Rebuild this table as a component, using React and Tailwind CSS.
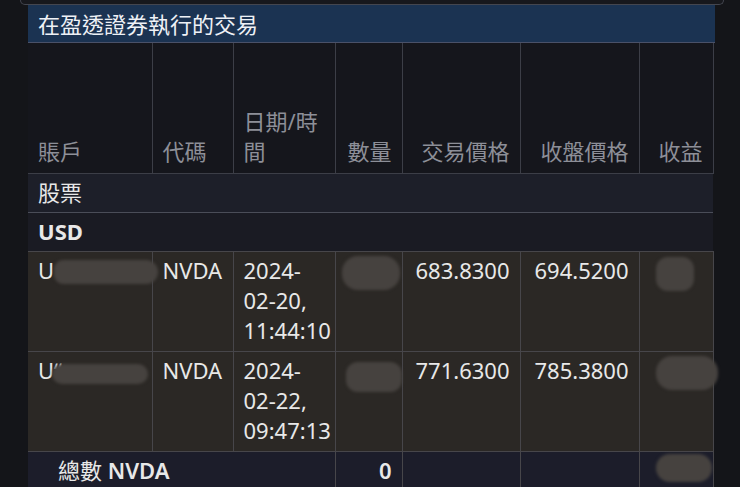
import React from 'react';

const cols = [
  { label: '賬戶', w: 'w-[124px]', align: 'text-left' },
  { label: '代碼', w: 'w-[81px]', align: 'text-left' },
  { label: '日期/時間', w: 'w-[102px]', align: 'text-left' },
  { label: '數量', w: 'w-[67px]', align: 'text-right' },
  { label: '交易價格', w: 'w-[118px]', align: 'text-right' },
  { label: '收盤價格', w: 'w-[119px]', align: 'text-right' },
  { label: '收益', w: 'w-[74px]', align: 'text-right' },
];

const trades = [
  { acct: 'U', date: ['2024-', '02-20,', '11:44:10'], price: '683.8300', close: '694.5200' },
  { acct: 'U\u02bb\u02bb', date: ['2024-', '02-22,', '09:47:13'], price: '771.6300', close: '785.3800' },
];

// blurred redaction smudge
const Smudge = ({ className }) => (
  <div className={`absolute rounded-[12px] bg-[#46423f] blur-[1.5px] ${className}`} />
);

const cell = 'border border-[#47464a] px-[10px] pt-[3px] pb-[4px] align-top';

export default function App() {
  return (
    <div
      className="min-h-screen bg-[#141519] text-[22px] leading-[30px] text-[#e8e8e8] overflow-hidden"
      style={{ fontFamily: '"Noto Sans", "Noto Sans CJK TC", sans-serif' }}
    >
      {/* bottom of the card above */}
      <div className="mx-[20px] w-[704px] h-[5px] rounded-b-[9px] border-x border-b border-[#44464f] bg-[#17181d]" />

      <div className="ml-[28px] w-[687px]">
        {/* Title */}
        <div className="h-[38px] bg-[#1b3352] px-[10px] flex items-center text-[#eef1f6] border-b border-[#4a5168]">
          在盈透證券執行的交易
        </div>

        <table className="w-[685px] table-fixed border-collapse">
          <thead>
            <tr className="h-[130px] bg-[#15161c]">
              {cols.map((c) => (
                <th
                  key={c.label}
                  className={`${c.w} ${c.align} border-x border-[#3c3e47] px-[10px] pb-[7px] align-bottom font-normal text-[#8d8f98] first:border-l-0`}
                >
                  {c.label}
                </th>
              ))}
            </tr>
          </thead>
          <tbody>
            <tr className="bg-[#1d1f29] border-t border-[#3c3e47]">
              <td colSpan={7} className="px-[10px] pt-[3px] pb-[5px] text-[#e8e8e8]">
                股票
              </td>
            </tr>
            <tr className="bg-[#1a1b23] border-t border-[#4a4d58]">
              <td colSpan={7} className="px-[10px] pt-[3px] pb-[5px] font-bold">
                USD
              </td>
            </tr>
            {trades.map((t, i) => (
              <tr key={i} className="bg-[#2b2825] h-[100px]">
                <td className={`${cell} relative border-l-0`}>
                  {t.acct}
                  <Smudge className={i === 0 ? 'left-[26px] top-[8px] w-[104px] h-[24px] rounded-r-[16px]' : 'left-[24px] top-[12px] w-[96px] h-[20px]'} />
                </td>
                <td className={cell}>NVDA</td>
                <td className={cell}>
                  {t.date.map((d) => (
                    <div key={d}>{d}</div>
                  ))}
                </td>
                <td className={`${cell} relative`}>
                  <Smudge className={i === 0 ? 'left-[6px] top-[4px] w-[58px] h-[34px] rounded-[16px]' : 'left-[10px] top-[10px] w-[56px] h-[30px]'} />
                </td>
                <td className={`${cell} text-right`}>{t.price}</td>
                <td className={`${cell} text-right`}>{t.close}</td>
                <td className={`${cell} relative`}>
                  <Smudge className={i === 0 ? 'left-[16px] top-[5px] w-[38px] h-[34px] rounded-[10px]' : 'left-[16px] top-[4px] w-[62px] h-[34px] rounded-[16px]'} />
                </td>
              </tr>
            ))}
            <tr className="bg-[#1c1d2a] h-[39px]">
              <td colSpan={3} className="border border-l-0 border-[#47464a] pl-[30px] pt-[3px] pb-[5px]">
                總數 <span className="font-semibold">NVDA</span>
              </td>
              <td className="border border-[#47464a] px-[10px] pt-[3px] pb-[5px] text-right font-semibold">0</td>
              <td className="border border-[#47464a]" />
              <td className="border border-[#47464a]" />
              <td className="border border-[#47464a] relative">
                <Smudge className="left-[16px] top-[2px] w-[56px] h-[28px] rounded-[14px]" />
              </td>
            </tr>
          </tbody>
        </table>
      </div>
    </div>
  );
}
